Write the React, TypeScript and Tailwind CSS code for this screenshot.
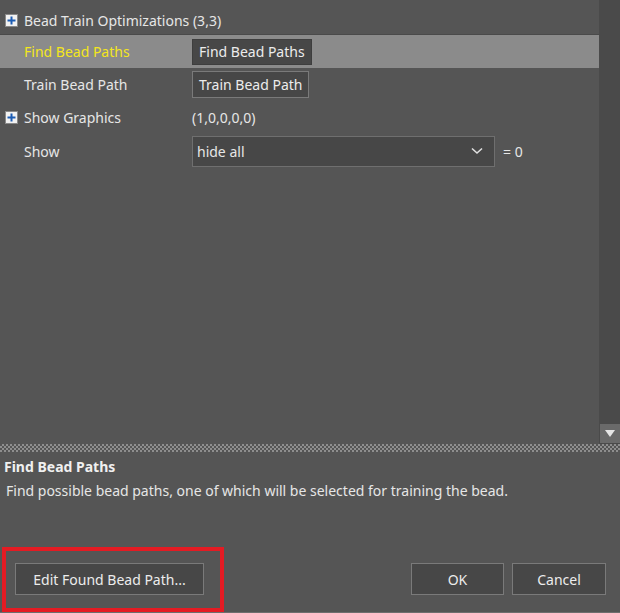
import React from "react";

const PlusBox = () => (
  <span className="inline-flex h-[13px] w-[13px] items-center justify-center border border-[#8a8a8a] bg-[#f2f2f2] mr-[6px] shrink-0">
    <svg width="9" height="9" viewBox="0 0 9 9">
      <rect x="3.5" y="0.5" width="2" height="8" fill="#1c5db4" />
      <rect x="0.5" y="3.5" width="8" height="2" fill="#1c5db4" />
    </svg>
  </span>
);

const Chevron = () => (
  <svg width="12" height="8" viewBox="0 0 12 8" fill="none">
    <path d="M1 1.5 L6 6 L11 1.5" stroke="#e0e0e0" strokeWidth="1.6" />
  </svg>
);

const PropertyGrid = () => (
  <div className="flex-1 flex flex-col">
    {/* category */}
    <div className="h-[34px] flex items-center pl-[5px] pt-[6px]">
      <PlusBox />
      <span>Bead Train Optimizations (3,3)</span>
    </div>
    <div className="h-px bg-[#4a4a4a]" />

    {/* selected row */}
    <div className="h-[33px] flex items-center bg-[#8b8b8b]">
      <span className="w-[192px] pl-[24px] text-[#f4e61c]">Find Bead Paths</span>
      <button className="h-[26px] px-[6px] bg-[#474747] border border-[#3e3e3e] text-[#ececec] leading-none">
        Find Bead Paths
      </button>
    </div>

    <div className="h-[33px] flex items-center">
      <span className="w-[192px] pl-[24px]">Train Bead Path</span>
      <button className="h-[27px] px-[6px] bg-[#474747] border border-[#7a7a7a] text-[#ececec] leading-none">
        Train Bead Path
      </button>
    </div>

    <div className="h-[33px] flex items-center">
      <span className="w-[192px] pl-[5px] flex items-center">
        <PlusBox />
        Show Graphics
      </span>
      <span>(1,0,0,0,0)</span>
    </div>

    <div className="h-[34px] flex items-center">
      <span className="w-[192px] pl-[24px]">Show</span>
      <div className="w-[303px] h-[31px] bg-[#474747] border border-[#6f6f6f] flex items-center justify-between pl-[4px] pr-[11px]">
        <span>hide all</span>
        <Chevron />
      </div>
      <span className="ml-[8px]">= 0</span>
    </div>
  </div>
);

const Scrollbar = () => (
  <div className="w-[21px] bg-[#4a4a4a] flex flex-col justify-end">
    <div className="h-[19px] ml-px bg-[#6a6a6a] flex items-center justify-center mb-px">
      <svg width="10" height="7" viewBox="0 0 10 7">
        <path d="M0 0 H10 L5 7 Z" fill="#e6e6e6" />
      </svg>
    </div>
  </div>
);

export default function App() {
  return (
    <div
      className="relative w-[620px] h-[613px] bg-[#555555] text-[#e6e6e6] text-[14px] flex flex-col overflow-hidden border-b border-[#6e6e6e]"
      style={{ fontFamily: '"Noto Sans", "Open Sans", sans-serif' }}
    >
      <div className="h-[444px] flex">
        <PropertyGrid />
        <Scrollbar />
      </div>

      {/* splitter */}
      <div className="h-[8px] bg-[conic-gradient(#8e8e8e_25%,#555555_0_50%,#8e8e8e_0_75%,#555555_0)] bg-[length:4px_4px]" />

      {/* help */}
      <div className="px-[4px] pt-[4px] flex flex-col">
        <div className="font-bold text-[#f0f0f0] leading-[22px]">Find Bead Paths</div>
        <div className="pl-[2px] leading-[26px]">
          Find possible bead paths, one of which will be selected for training the bead.
        </div>
      </div>

      {/* footer */}
      <div className="mt-auto flex items-center pl-[15px] pr-[14px] pb-[17px]">
        <button className="w-[189px] h-[32px] bg-[#474747] border border-[#7a7a7a] text-[#ececec]">
          Edit Found Bead Path...
        </button>
        <div className="ml-auto flex gap-[8px]">
          <button className="w-[93px] h-[32px] bg-[#474747] border border-[#7a7a7a] text-[#ececec]">OK</button>
          <button className="w-[94px] h-[32px] bg-[#474747] border border-[#7a7a7a] text-[#ececec]">Cancel</button>
        </div>
      </div>

      {/* annotation */}
      <div className="absolute left-[2px] top-[547px] w-[222px] h-[65px] border-[4px] border-[#e41b23]" />
    </div>
  );
}
